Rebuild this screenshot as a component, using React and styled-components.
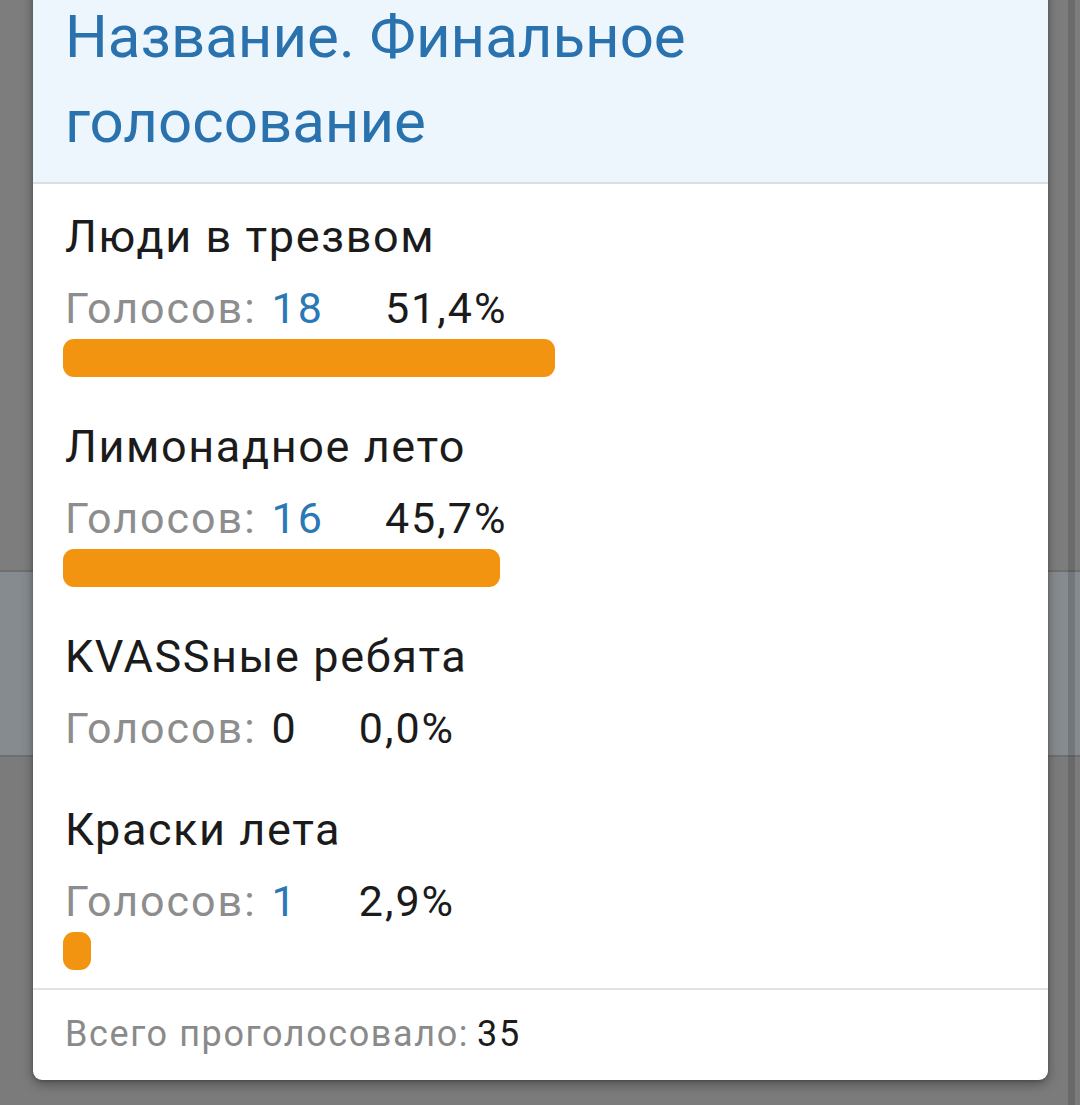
import React from 'react';
import styled, { createGlobalStyle } from 'styled-components';

const GlobalStyle = createGlobalStyle`
  html, body {
    margin: 0;
    padding: 0;
    background: #7b7b7b;
  }
  body {
    font-family: Roboto, "Noto Sans", "Liberation Sans", sans-serif;
    -webkit-font-smoothing: antialiased;
  }
`;

const Page = styled.div`
  position: relative;
  width: 1080px;
  height: 1105px;
  overflow: hidden;
  display: flex;
  flex-direction: column;
  background: #7c7c7c;
`;

const BackdropBlock = styled.div`
  height: ${p => p.$h}px;
  background: ${p => p.$bg};
  border-bottom: ${p => (p.$line ? '2px solid #6f6f6f' : 'none')};
  flex-shrink: 0;
`;

const Scrollbar = styled.div`
  position: absolute;
  top: 0;
  right: 5px;
  width: 7px;
  height: 100%;
  background: rgba(0, 0, 0, 0.14);
`;

const Dialog = styled.div`
  position: absolute;
  left: 33px;
  bottom: 25px;
  width: 1015px;
  background: #fff;
  border-radius: 0 0 9px 9px;
  box-shadow: 0 4px 12px rgba(0, 0, 0, 0.35), 0 1px 3px rgba(0, 0, 0, 0.2);
  display: flex;
  flex-direction: column;
`;

const Header = styled.div`
  background: #edf5fd;
  padding: 20px 30px 18px 30px;
  border-bottom: 2px solid #dcdfe2;
`;

const Title = styled.h1`
  margin: 0;
  font-size: 60px;
  line-height: 85px;
  font-weight: 400;
  color: #2a72ae;
  padding-left: 2px;
`;

const Body = styled.div`
  padding: 25px 28px 18px 30px;
  display: flex;
  flex-direction: column;
  gap: 42px;
`;

const Option = styled.div`
  display: flex;
  flex-direction: column;
`;

const OptionName = styled.div`
  font-size: 45px;
  line-height: 56px;
  letter-spacing: 1.6px;
  color: #1b1b1b;
  margin-bottom: 18px;
  padding-left: 2px;
`;

const VotesRow = styled.div`
  display: flex;
  align-items: baseline;
  font-size: 43px;
  line-height: 50px;
  letter-spacing: 2px;
  padding-left: 2px;
`;

const VotesLabel = styled.span`
  color: #8d8d8d;
`;

const VotesCount = styled.span`
  color: ${p => (p.$zero ? '#1b1b1b' : '#2a78b5')};
  margin-left: 15px;
`;

const Percent = styled.span`
  color: #1b1b1b;
  margin-left: 61px;
`;

const Track = styled.div`
  margin-top: 6px;
  height: ${p => (p.$empty ? '1px' : '38px')};
`;

const Fill = styled.div`
  height: 100%;
  min-width: 28px;
  background: #f29410;
  border-radius: 11px;
`;

const Footer = styled.div`
  border-top: 2px solid #e2e2e2;
  padding: 21px 30px 23px 32px;
  font-size: 36px;
  line-height: 46px;
  letter-spacing: 1.6px;
`;

const FooterLabel = styled.span`
  color: #8a8a8a;
`;

const FooterValue = styled.span`
  color: #1b1b1b;
  margin-left: 8px;
`;

const options = [
  { name: 'Люди в трезвом', votes: 18, percent: '51,4%', share: 51.4 },
  { name: 'Лимонадное лето', votes: 16, percent: '45,7%', share: 45.7 },
  { name: 'KVASSные ребята', votes: 0, percent: '0,0%', share: 0 },
  { name: 'Краски лета', votes: 1, percent: '2,9%', share: 2.9 },
];

export default function App() {
  return (
    <>
      <GlobalStyle />
      <Page>
        <BackdropBlock $h={570} $bg="#7d7d7d" $line />
        <BackdropBlock $h={183} $bg="#868b90" $line />
        <BackdropBlock $h={350} $bg="#7b7b7b" />
        <Scrollbar />
        <Dialog>
          <Header>
            <Title>Название. Финальное голосование</Title>
          </Header>
          <Body>
            {options.map(o => (
              <Option key={o.name}>
                <OptionName>{o.name}</OptionName>
                <VotesRow>
                  <VotesLabel>Голосов:</VotesLabel>
                  <VotesCount $zero={o.votes === 0}>{o.votes}</VotesCount>
                  <Percent>{o.percent}</Percent>
                </VotesRow>
                <Track $empty={o.share === 0}>
                  {o.share > 0 && <Fill style={{ width: `${o.share}%` }} />}
                </Track>
              </Option>
            ))}
          </Body>
          <Footer>
            <FooterLabel>Всего проголосовало:</FooterLabel>
            <FooterValue>35</FooterValue>
          </Footer>
        </Dialog>
      </Page>
    </>
  );
}
